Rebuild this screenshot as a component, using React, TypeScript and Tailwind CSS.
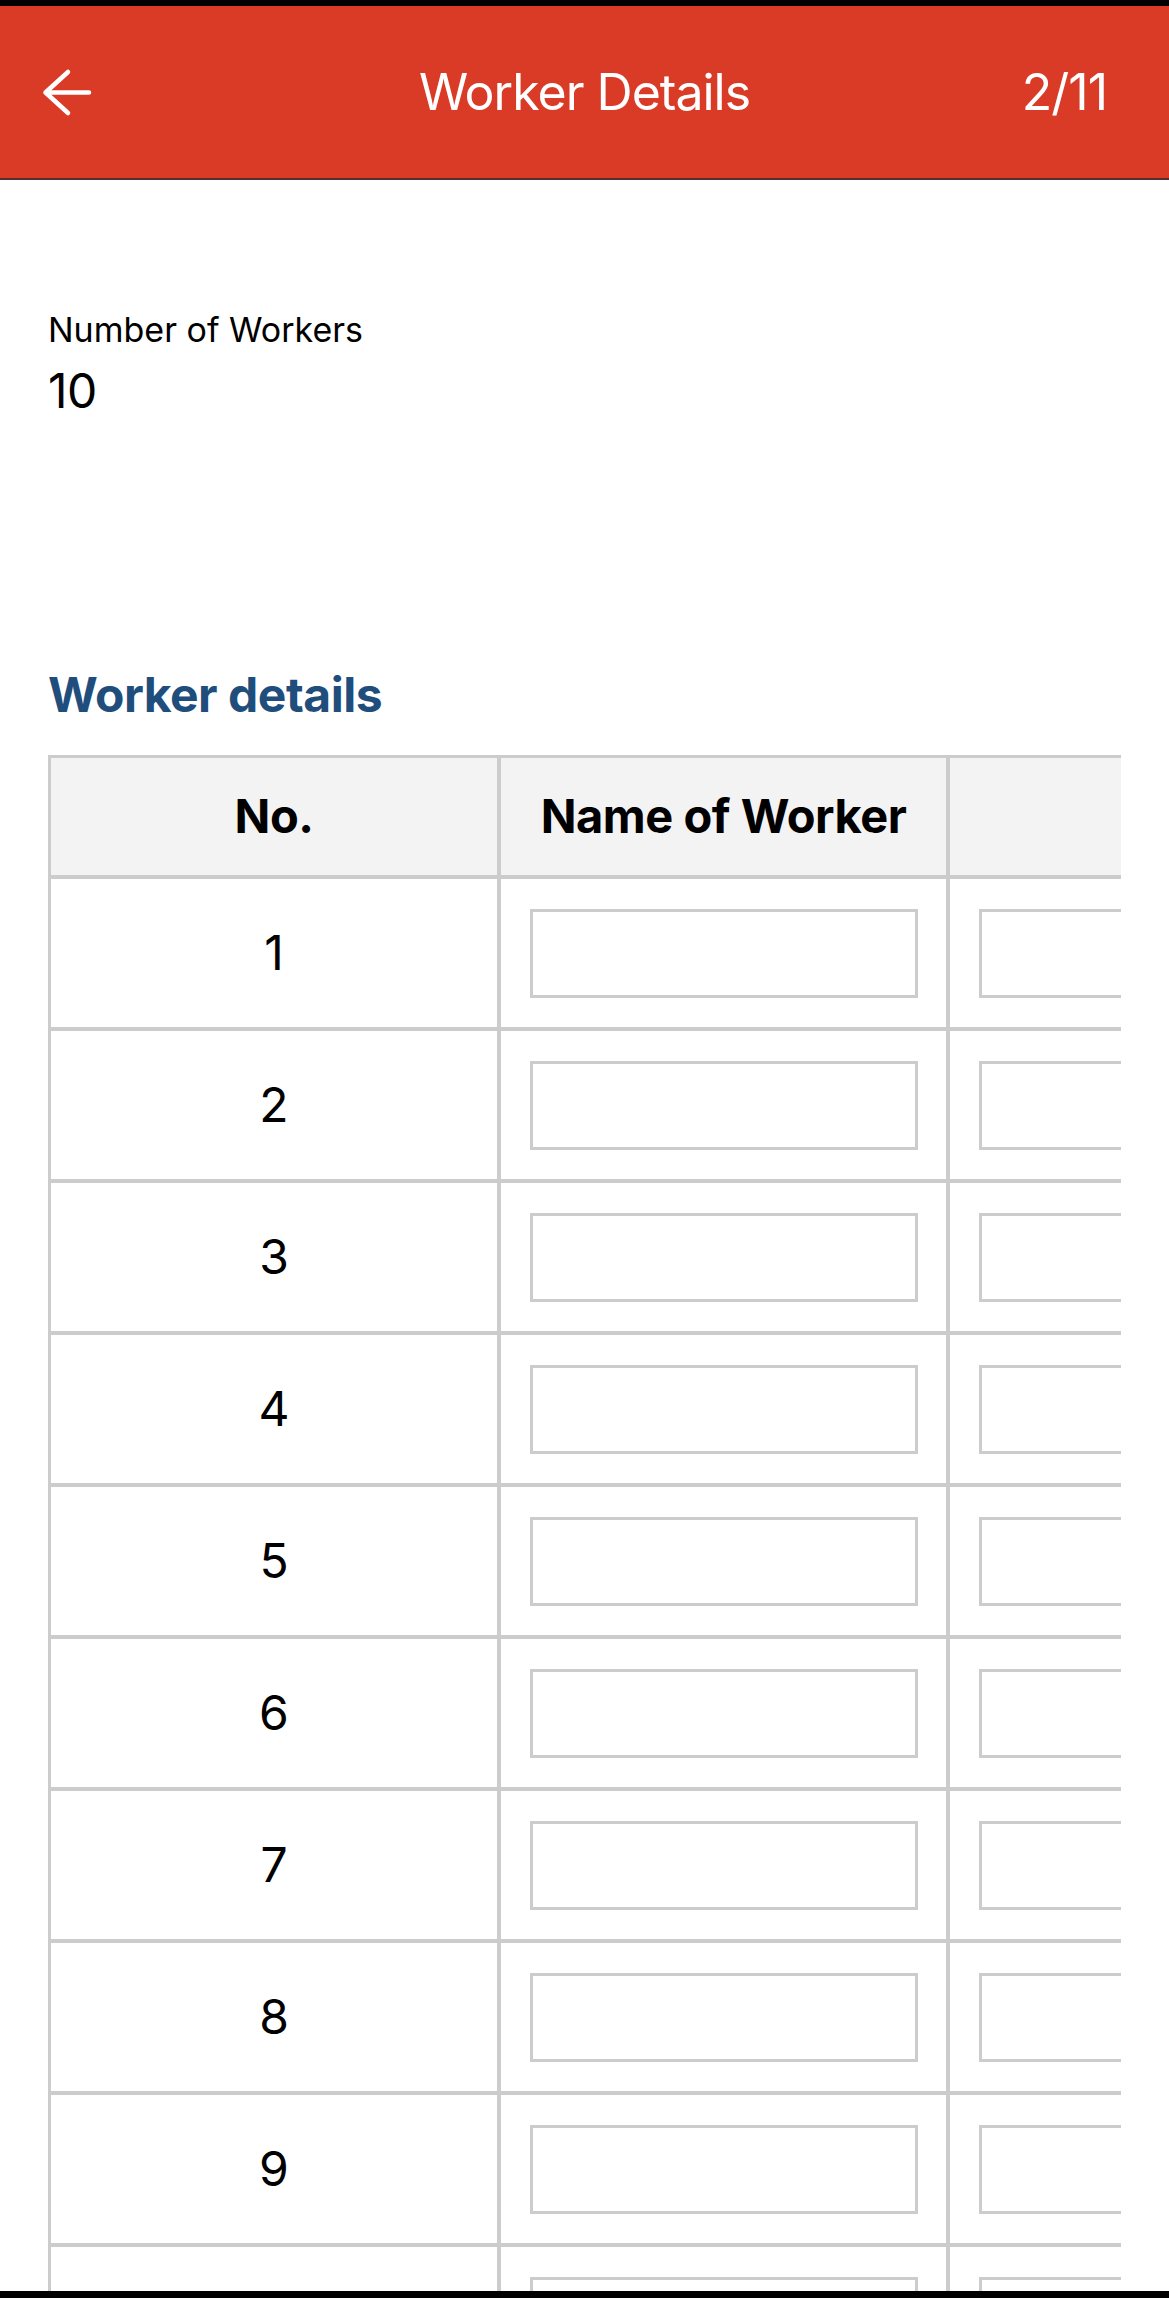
const ROWS = Array.from({ length: 10 }, (_, i) => i + 1);

function BackArrow() {
  return (
    <svg width="52" height="51" viewBox="0 0 52 51" fill="none" className="block">
      <path
        d="M48 25.5H4.5M27 5L4.5 25.5L27 46"
        stroke="white"
        strokeWidth="4.5"
        strokeLinecap="round"
        strokeLinejoin="round"
      />
    </svg>
  );
}

function Field() {
  return <div className="w-[388px] h-[89px] border-[3px] border-[#cccccc] bg-white" />;
}

export default function App() {
  return (
    <div className="h-[2298px] overflow-hidden bg-white flex flex-col font-['Inter','Liberation_Sans',sans-serif] text-black">
      <div className="h-[6px] shrink-0 bg-black" />

      {/* Nav bar */}
      <header className="h-[174px] shrink-0 bg-[#d93b27] border-b-2 border-[#55302b] grid grid-cols-[1fr_auto_1fr] items-center text-white">
        <div className="pl-[41px]">
          <BackArrow />
        </div>
        <h1 className="text-[50px] leading-[60px] font-normal tracking-[-0.02em]">Worker Details</h1>
        <div className="flex justify-end pr-[62px] text-[50px] leading-[60px] tracking-[-0.02em]">2/11</div>
      </header>

      <main className="flex-1 min-h-0 px-12">
        <div className="mt-[130px] text-[34px] leading-[40px]">Number of Workers</div>
        <div className="mt-[12px] text-[48px] leading-[58px] tracking-[-0.01em]">10</div>

        <h2 className="mt-[246px] text-[48px] leading-[58px] font-bold text-[#1f4e7d] tracking-[-0.01em]">
          Worker details
        </h2>

        <div className="mt-[31px] overflow-hidden">
          <div className="w-max border-t-[3px] border-l-[3px] border-[#cccccc]">
            {/* Header row */}
            <div className="flex bg-[#f3f3f3]">
              <div className="w-[450px] h-[121px] border-r-4 border-b-4 border-[#cccccc] flex items-center justify-center text-[47px] font-bold tracking-[-0.01em]">
                No.
              </div>
              <div className="w-[449px] h-[121px] border-r-4 border-b-4 border-[#cccccc] flex items-center justify-center text-[47px] font-bold tracking-[-0.01em]">
                Name of Worker
              </div>
              <div className="w-[449px] h-[121px] border-r-4 border-b-4 border-[#cccccc]" />
            </div>

            {ROWS.map((n) => (
              <div key={n} className="flex">
                <div className="w-[450px] h-[152px] border-r-4 border-b-4 border-[#cccccc] flex items-center justify-center text-[48px]">
                  {n}
                </div>
                <div className="w-[449px] h-[152px] border-r-4 border-b-4 border-[#cccccc] flex items-center justify-center">
                  <Field />
                </div>
                <div className="w-[449px] h-[152px] border-r-4 border-b-4 border-[#cccccc] flex items-center justify-center">
                  <Field />
                </div>
              </div>
            ))}
          </div>
        </div>
      </main>

      <div className="h-[7px] shrink-0 bg-black" />
    </div>
  );
}
